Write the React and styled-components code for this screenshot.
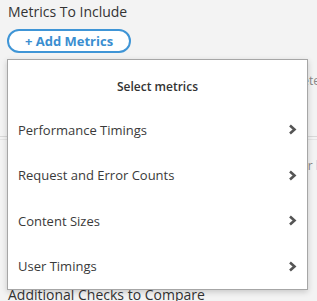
import styled, { createGlobalStyle } from "styled-components";

const GlobalStyle = createGlobalStyle`
  body {
    margin: 0;
    background: #f3f3f3;
    font-family: "Open Sans", "Liberation Sans", sans-serif;
    overflow: hidden;
  }
`;

const Page = styled.div`
  width: 317px;
  height: 301px;
  padding: 2px 0 0 7px;
  box-sizing: border-box;
  overflow: hidden;
`;

const SectionTitle = styled.h2`
  margin: 0;
  padding-left: 1px;
  font-size: 14px;
  line-height: 20px;
  font-weight: 400;
  color: #333;
`;

const AddButton = styled.button`
  margin-top: 7px;
  width: 124px;
  height: 24px;
  border: 2px solid #3f95d6;
  border-radius: 12px;
  background: #fff;
  color: #3a8ed0;
  font-family: inherit;
  font-size: 13px;
  font-weight: 700;
  line-height: 18px;
  padding: 0;
  cursor: pointer;
`;

const Anchor = styled.div`
  position: relative;
`;

const BehindRow = styled.div`
  height: ${(p) => p.$h}px;
  display: flex;
  align-items: center;
  justify-content: flex-end;
  font-size: 12px;
  color: #888;
  white-space: nowrap;
  margin-right: ${(p) => p.$shift}px;
`;

const Link = styled.span`
  color: #3f95d6;
  margin-left: 3px;
`;

const Divider = styled.div`
  height: 2px;
  margin-left: -7px;
  border-top: 1px solid #d8d8d8;
  border-bottom: 1px solid #e4e4e4;
`;

const NextTitle = styled(SectionTitle)`
  margin-top: 95px;
`;

const Menu = styled.div`
  position: absolute;
  top: 6px;
  left: 0;
  width: 301px;
  background: #fff;
  border: 1px solid #a6a6a6;
  box-shadow: 0 2px 6px rgba(0, 0, 0, 0.18);
  box-sizing: border-box;
`;

const MenuTitle = styled.div`
  padding-top: 15px;
  height: 24px;
  margin-bottom: 8px;
  text-align: center;
  font-size: 12px;
  line-height: 24px;
  font-weight: 600;
  color: #333;
`;

const MenuItem = styled.div`
  height: 45.5px;
  display: flex;
  align-items: center;
  justify-content: space-between;
  padding: 0 10px 0 10px;
  font-size: 13px;
  color: #3a3a3a;
  cursor: pointer;
`;

const Chevron = () => (
  <svg width="9" height="11" viewBox="0 0 9 11">
    <polyline
      points="2,1.5 6.5,5.5 2,9.5"
      fill="none"
      stroke="#555"
      strokeWidth="2.6"
      strokeLinejoin="miter"
    />
  </svg>
);

const items = [
  "Performance Timings",
  "Request and Error Counts",
  "Content Sizes",
  "User Timings",
];

const App = () => (
  <Page>
    <GlobalStyle />
    <SectionTitle>Metrics To Include</SectionTitle>
    <AddButton>+ Add Metrics</AddButton>
    <Anchor>
      <BehindRow $h={54} $shift={-3}>Metrics to complete</BehindRow>
      <BehindRow $h={29} $shift={0} />
      <Divider />
      <BehindRow $h={50} $shift={-12}>
        filter<Link>by</Link>
      </BehindRow>
      <NextTitle>Additional Checks to Compare</NextTitle>
      <Menu>
        <MenuTitle>Select metrics</MenuTitle>
        {items.map((label) => (
          <MenuItem key={label}>
            {label}
            <Chevron />
          </MenuItem>
        ))}
      </Menu>
    </Anchor>
  </Page>
);

export default App;
